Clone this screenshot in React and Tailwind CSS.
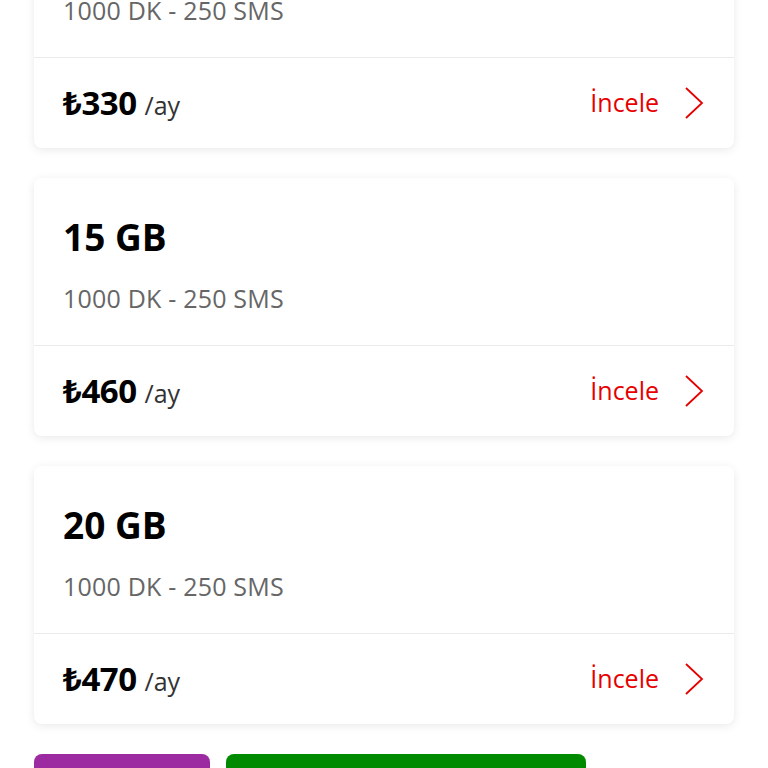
const plans = [
  { gb: "10 GB", price: "330" },
  { gb: "15 GB", price: "460" },
  { gb: "20 GB", price: "470" },
];

function Chevron() {
  return (
    <svg className="w-[22px] h-[36px]" viewBox="0 0 22 36" fill="none" stroke="#e60000" strokeWidth={1.8}>
      <path d="M3 3l16 15L3 33" />
    </svg>
  );
}

export default function App() {
  return (
    <div className="w-[768px] h-[768px] overflow-hidden bg-white font-['Open_Sans','Noto_Sans',sans-serif]">
      <div className="px-[34px] mt-[-110px] flex flex-col gap-[30px]">
        {plans.map((p) => (
          <div key={p.gb} className="bg-white rounded-lg shadow-[0_2px_10px_rgba(0,0,0,0.09)]">
            <div className="h-[168px] px-[29px] pt-[37px] border-b border-[#ebebeb]">
              <div className="text-[37px] leading-[44px] font-bold text-black">{p.gb}</div>
              <div className="mt-[22px] text-[25px] leading-[34px] text-[#666] tracking-[0.2px]">1000 DK - 250 SMS</div>
            </div>
            <div className="h-[90px] px-[29px] flex items-center justify-between">
              <div className="flex items-baseline gap-[8px]">
                <span className="text-[33px] font-bold text-black tracking-[-0.5px]">₺{p.price}</span>
                <span className="text-[25px] text-[#333]">/ay</span>
              </div>
              <div className="flex items-center gap-[24px]">
                <span className="text-[25px] text-[#e60000]">İncele</span>
                <Chevron />
              </div>
            </div>
          </div>
        ))}
        <div className="flex gap-[16px]">
          <div className="w-[176px] h-[40px] rounded-t-lg bg-[#9c2aa0]" />
          <div className="w-[360px] h-[40px] rounded-t-lg bg-[#008a00]" />
        </div>
      </div>
    </div>
  );
}
